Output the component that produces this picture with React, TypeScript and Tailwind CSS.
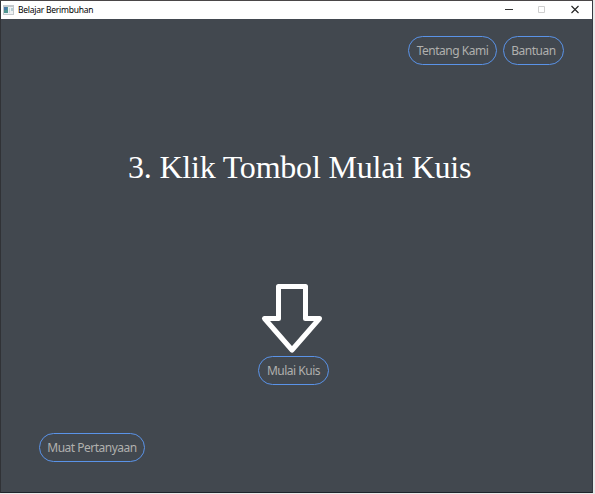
import type { ReactNode } from "react";

function PillButton({ children, className }: { children: ReactNode; className: string }) {
  return (
    <button
      className={`flex h-[29px] items-center justify-center whitespace-nowrap rounded-full border border-[#5a93e8] font-['Noto_Sans','Open_Sans',sans-serif] text-[12px] leading-none tracking-[-0.5px] text-[#b0b0ae] ${className}`}
    >
      {children}
    </button>
  );
}

function TitleBar() {
  return (
    <header className="flex h-[18px] shrink-0 items-center bg-white">
      <svg className="ml-[2px] shrink-0" width="11" height="10" viewBox="0 0 11 10" shapeRendering="crispEdges">
        <rect width="11" height="10" fill="#c3c8cc" />
        <rect x="1" y="2" width="9" height="7" fill="#eef2f4" />
        <rect x="1" y="2" width="4" height="6" fill="#4f9690" />
        <rect x="1" y="2" width="3" height="3" fill="#4778a8" />
        <rect x="6" y="3" width="1" height="5" fill="#d2dade" />
        <rect x="8" y="3" width="2" height="3" fill="#b6cdd3" />
      </svg>
      <h1 className="ml-[4px] flex-1 whitespace-nowrap font-['Noto_Sans','Open_Sans',sans-serif] text-[8.5px] leading-none tracking-[-0.25px] text-black">
        Belajar Berimbuhan
      </h1>
      <svg className="mr-[12px] shrink-0" width="76" height="10" viewBox="0 0 76 10" fill="none">
        <path d="M1 4.5H9" stroke="#333" />
        <path d="M34.5 1.5H40.5V7.5H34.5Z" stroke="#cfcfcf" />
        <path d="M67.5 1L74.5 8M74.5 1L67.5 8" stroke="#222" strokeWidth="1.1" />
      </svg>
    </header>
  );
}

export default function App() {
  return (
    <div className="h-[494px] w-[595px] overflow-hidden bg-[#e8e8e8] pb-px pr-[2px]">
      <div className="flex h-[493px] w-[593px] flex-col border border-b-[#20242b] border-l-[#303236] border-r-[#343a42] border-t-[#4a4648]">
        <TitleBar />
        <main className="flex flex-1 flex-col bg-[#42484f]">
          <nav className="mr-[28px] mt-[17px] flex justify-end gap-[6px]">
            <PillButton className="w-[89px]">Tentang Kami</PillButton>
            <PillButton className="w-[61px]">Bantuan</PillButton>
          </nav>
          <h2 className="ml-[127px] mt-[82px] h-[40px] whitespace-nowrap font-['Liberation_Serif',serif] text-[32px] leading-[40px] tracking-[-0.2px] text-white">
            3. Klik Tombol Mulai Kuis
          </h2>
          <svg className="ml-[259px] mt-[96px] shrink-0" width="64" height="72" viewBox="260 283 64 72">
            <path
              d="M278.5 286.5H305.5V318.5H319.5L292 350L264.5 318.5H278.5Z"
              fill="none"
              stroke="white"
              strokeWidth="5"
              strokeLinejoin="round"
            />
          </svg>
          <PillButton className="ml-[257px] mt-px w-[71px]">Mulai Kuis</PillButton>
          <PillButton className="ml-[38px] mt-[48px] w-[106px]">Muat Pertanyaan</PillButton>
        </main>
      </div>
    </div>
  );
}
